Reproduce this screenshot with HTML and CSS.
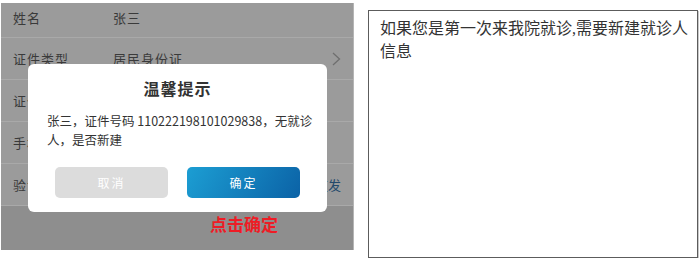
FILE: index.html
```html
<!DOCTYPE html>
<html lang="zh-CN">

<head>
    <meta charset="UTF-8">
    <title>新建就诊人</title>
    <link rel="stylesheet" href="styles.css">
</head>

<body>
    <div class="phone">
        <div class="form-list">
            <div class="row first">
                <span class="label">姓名</span>
                <span class="value">张三</span>
            </div>
            <div class="row">
                <span class="label">证件类型</span>
                <span class="value">居民身份证</span>
                <svg class="chevron" width="9" height="14" viewBox="0 0 9 14">
                    <polyline points="1,1 7.5,7 1,13" fill="none" stroke="#6f6f6f" stroke-width="1.3" />
                </svg>
            </div>
            <div class="row">
                <span class="label">证件号码</span>
            </div>
            <div class="row">
                <span class="label">手机号码</span>
            </div>
            <div class="row">
                <span class="label">验证码</span>
                <span class="send">重发</span>
            </div>
        </div>

        <!-- 弹窗 -->
        <div class="dialog">
            <div class="dialog-title">温馨提示</div>
            <div class="dialog-text">张三，证件号码 110222198101029838，无就诊人，是否新建</div>
            <div class="dialog-btns">
                <button class="btn btn-cancel">取消</button>
                <button class="btn btn-ok">确定</button>
            </div>
        </div>
        <div class="tip">点击确定</div>
    </div>

    <div class="note">
        如果您是第一次来我院就诊,需要新建就诊人信息
    </div>
</body>

</html>
```

FILE: styles.css
```css
body {
    margin: 0;
    background-color: #fff;
    font-family: "Noto Sans CJK SC", sans-serif;
    display: flex;
    align-items: flex-start;
}

.phone {
    position: relative;
    width: 352px;
    height: 247px;
    margin: 3px 0 0 1px;
    background-color: #8e8e8e;
    border-right: 1px solid #b5b5b5;
}

.form-list {
    background-color: #9b9b9b;
}

.row {
    display: flex;
    align-items: center;
    height: 41px;
    padding: 0 12px 0 12px;
    border-bottom: 1px solid #a9a9a9;
    font-size: 13px;
    color: #3a3a3a;
}

.row.first {
    height: 28px;
    padding-bottom: 6px;
}

.label {
    width: 100px;
    letter-spacing: 1px;
}

.value {
    flex: 1;
    letter-spacing: 1px;
}

.send {
    margin-left: auto;
    color: #23496b;
}

.dialog {
    position: absolute;
    left: 27px;
    top: 61px;
    width: 299px;
    height: 148px;
    box-sizing: border-box;
    padding: 12px 12px 0 19px;
    background-color: #fff;
    border-radius: 6px;
    color: #333;
}

.dialog-title {
    text-align: center;
    font-size: 16px;
    font-weight: bold;
    letter-spacing: 1px;
    line-height: 24px;
    margin-left: -7px;
}

.dialog-text {
    margin-top: 11px;
    font-size: 12.5px;
    line-height: 19px;
    height: 38px;
}

.dialog-btns {
    display: flex;
    gap: 19px;
    margin-top: 18px;
    padding: 0 8px;
}

.btn {
    width: 113px;
    height: 31px;
    border: none;
    border-radius: 5px;
    color: #fff;
    font-family: "Noto Sans CJK SC", sans-serif;
    font-size: 12px;
    letter-spacing: 2px;
}

.btn-cancel {
    background-color: #dcdcdc;
}

.btn-ok {
    background: linear-gradient(120deg, #1c9ed3, #0b62a6);
}

.tip {
    position: absolute;
    left: 209px;
    top: 209px;
    font-size: 17px;
    font-weight: bold;
    color: #ee1c25;
    line-height: 24px;
}

.note {
    width: 311px;
    height: 240px;
    margin: 10px 0 0 14px;
    padding: 6px 6px 0 11px;
    border: 1px solid #5c5c5c;
    box-shadow: 1px 1px 0 #c8c8c8;
    font-family: "Liberation Serif", "Noto Sans CJK SC", serif;
    font-size: 16px;
    line-height: 23px;
    color: #333;
}
```
